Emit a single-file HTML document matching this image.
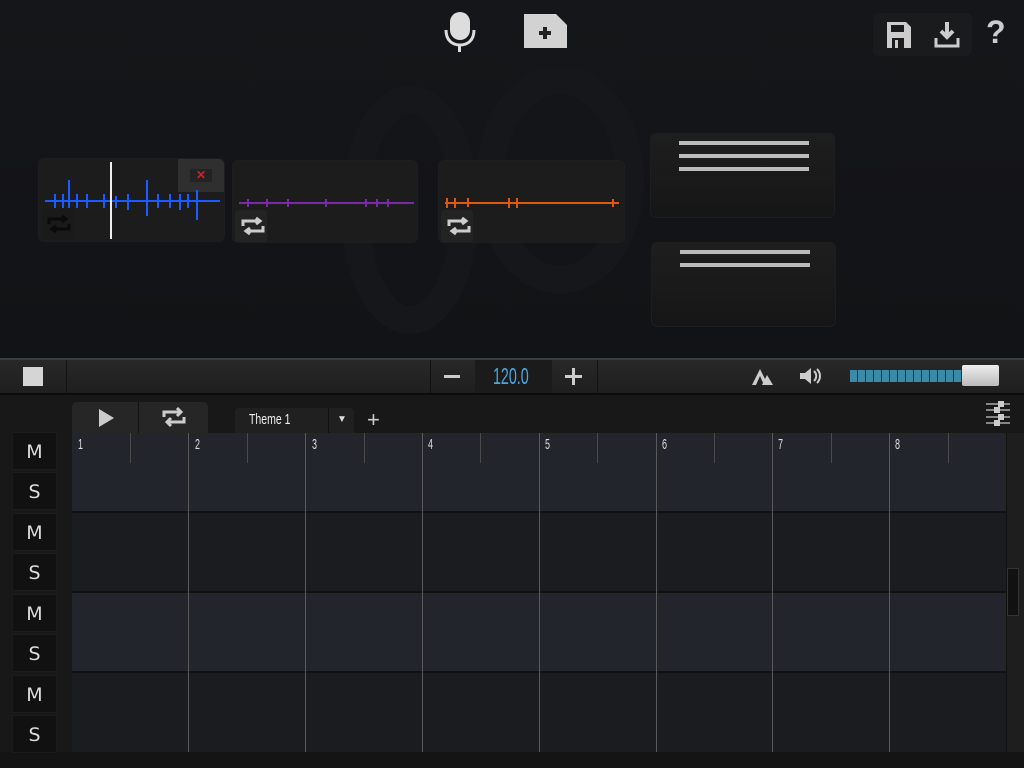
<!DOCTYPE html>
<html><head><meta charset="utf-8"><style>
*{margin:0;padding:0;box-sizing:border-box}
body{width:1024px;height:768px;overflow:hidden;background:#131416;font-family:"Liberation Sans",sans-serif;position:relative}
.a{position:absolute}
.card{position:absolute;background:#1c1c1d;border-radius:6px;border:1px solid #1e1e1f}
.loopbtn{position:absolute;width:32px;height:32px;background:#232324;border-radius:3px}
.ms{position:absolute;left:12px;width:45px;height:38px;background:#111;border:1px solid #1c1c1c;color:#ddd;font-size:19px;text-align:center;line-height:38px;font-family:"DejaVu Sans",sans-serif}
.num{position:absolute;top:436px;color:#ddd;font-size:15px;transform:scaleX(0.6);transform-origin:left}
</style></head><body>
<div class="a" style="left:0;top:0;width:1024px;height:358px;background:linear-gradient(#151619,#121316)"></div>
<svg class="a" style="left:330px;top:60px" width="330" height="290"><g fill="none" stroke="#16171a" stroke-width="28"><ellipse cx="80" cy="150" rx="55" ry="110"/><ellipse cx="230" cy="120" rx="70" ry="100"/></g></svg>
<svg class="a" style="left:442px;top:10px" width="36" height="44"><rect x="8" y="2" width="20" height="28" rx="10" fill="#ddd"/><path d="M4 20c0 10 6 15 14 15s14-5 14-15" stroke="#ddd" stroke-width="3" fill="none"/><rect x="16" y="34" width="3" height="8" fill="#ddd"/></svg>
<svg class="a" style="left:523px;top:13px" width="45" height="36"><path d="M1 1h32l11 11v23H1z" fill="#d2d2d2"/><path d="M20 14h4v4h4v4h-4v4h-4v-4h-4v-4h4z" fill="#222"/></svg>
<div class="a" style="left:873px;top:13px;width:99px;height:43px;background:#1a1b1d;border-radius:6px"></div>
<svg class="a" style="left:886px;top:21px" width="26" height="28"><path d="M1 1h19l5 5v21H1z" fill="#ccc"/><rect x="5" y="4" width="13" height="7" fill="#1a1b1d"/><rect x="6" y="17" width="12" height="10" fill="#1a1b1d"/><rect x="9" y="19" width="3" height="8" fill="#ccc"/></svg>
<svg class="a" style="left:933px;top:21px" width="28" height="28"><path d="M14 1v14M8 10l6 6 6-6" stroke="#ccc" stroke-width="4" fill="none"/><path d="M3 17v8h22v-8" stroke="#ccc" stroke-width="3" fill="none"/></svg>
<div class="a" style="left:986px;top:14px;color:#ccc;font-size:32px;font-weight:bold">?</div>
<div class="card" style="left:38px;top:158px;width:187px;height:84px"></div>
<div class="a" style="left:178px;top:159px;width:46px;height:33px;background:#2f2f30;border-radius:0 6px 0 0"></div>
<div class="a" style="left:190px;top:169px;width:22px;height:13px;background:#232324;color:#d02030;font-size:12px;text-align:center;line-height:13px;font-weight:bold">✕</div>
<svg class="a" style="left:36px;top:166px" width="185" height="76"><g stroke="#1a5cff" stroke-width="2"><line x1="9" y1="35" x2="184" y2="35"/><line x1="19" y1="28" x2="19" y2="42"/><line x1="27" y1="28" x2="27" y2="42"/><line x1="33" y1="14" x2="33" y2="48"/><line x1="41" y1="28" x2="41" y2="42"/><line x1="51" y1="28" x2="51" y2="42"/><line x1="68" y1="28" x2="68" y2="42"/><line x1="80" y1="30" x2="80" y2="42"/><line x1="92" y1="28" x2="92" y2="44"/><line x1="111" y1="14" x2="111" y2="50"/><line x1="122" y1="28" x2="122" y2="42"/><line x1="134" y1="28" x2="134" y2="42"/><line x1="144" y1="28" x2="144" y2="44"/><line x1="152" y1="28" x2="152" y2="42"/><line x1="161" y1="24" x2="161" y2="54"/></g></svg>
<div class="a" style="left:110px;top:162px;width:2px;height:77px;background:#eee"></div>
<div class="loopbtn" style="left:42px;top:208px;background:#1a1a1a"></div>
<svg class="a" style="left:46px;top:214px" width="26" height="20"><path d="M3 10V5h16M16 2l4 3-4 3M23 10v5H7M10 18l-4-3 4-3" stroke="#0a0a0a" stroke-width="3" fill="none"/></svg>
<div class="card" style="left:232px;top:160px;width:186px;height:83px"></div>
<svg class="a" style="left:238px;top:196px" width="176" height="16"><g stroke="#7a2aa8" stroke-width="2"><line x1="1" y1="7" x2="176" y2="7"/><line x1="10" y1="3" x2="10" y2="11"/><line x1="29" y1="3" x2="29" y2="11"/><line x1="50" y1="3" x2="50" y2="11"/><line x1="88" y1="3" x2="88" y2="11"/><line x1="128" y1="3" x2="128" y2="11"/><line x1="139" y1="3" x2="139" y2="11"/><line x1="150" y1="3" x2="150" y2="11"/></g></svg>
<div class="loopbtn" style="left:235px;top:210px"></div>
<svg class="a" style="left:240px;top:216px" width="26" height="20"><path d="M3 10V5h16M16 2l4 3-4 3M23 10v5H7M10 18l-4-3 4-3" stroke="#ccc" stroke-width="3" fill="none"/></svg>
<div class="card" style="left:438px;top:160px;width:187px;height:83px"></div>
<svg class="a" style="left:443px;top:195px" width="178" height="16"><g stroke="#e0580e" stroke-width="2"><line x1="2" y1="8" x2="176" y2="8"/><line x1="4" y1="3" x2="4" y2="13"/><line x1="12" y1="3" x2="12" y2="13"/><line x1="25" y1="3" x2="25" y2="12"/><line x1="66" y1="3" x2="66" y2="13"/><line x1="74" y1="3" x2="74" y2="13"/><line x1="170" y1="4" x2="170" y2="12"/></g></svg>
<div class="loopbtn" style="left:441px;top:210px"></div>
<svg class="a" style="left:446px;top:216px" width="26" height="20"><path d="M3 10V5h16M16 2l4 3-4 3M23 10v5H7M10 18l-4-3 4-3" stroke="#ccc" stroke-width="3" fill="none"/></svg>
<div class="card" style="left:650px;top:133px;width:185px;height:85px;background:linear-gradient(#1e1e1f,#161617)"></div>
<div class="a" style="left:679px;top:141px;width:130px;height:4px;background:#bbb"></div>
<div class="a" style="left:679px;top:154px;width:130px;height:4px;background:#bbb"></div>
<div class="a" style="left:679px;top:167px;width:130px;height:4px;background:#bbb"></div>
<div class="card" style="left:651px;top:242px;width:185px;height:85px;background:linear-gradient(#1e1e1f,#161617)"></div>
<div class="a" style="left:680px;top:250px;width:130px;height:4px;background:#bbb"></div>
<div class="a" style="left:680px;top:263px;width:130px;height:4px;background:#bbb"></div>
<div class="a" style="left:0;top:358px;width:1024px;height:2px;background:#3a3b3d"></div>
<div class="a" style="left:0;top:360px;width:1024px;height:33px;background:linear-gradient(#282829,#1f1f20)"></div>
<div class="a" style="left:0;top:393px;width:1024px;height:2px;background:#0c0c0c"></div>
<div class="a" style="left:23px;top:367px;width:20px;height:19px;background:#d5d5d5"></div>
<div class="a" style="left:66px;top:360px;width:1px;height:33px;background:#111"></div>
<div class="a" style="left:430px;top:360px;width:1px;height:33px;background:#111"></div>
<div class="a" style="left:475px;top:360px;width:77px;height:33px;background:#1b1b1c"></div>
<div class="a" style="left:597px;top:360px;width:1px;height:33px;background:#111"></div>
<div class="a" style="left:444px;top:375px;width:16px;height:3px;background:#ccc"></div>
<div class="a" style="left:493px;top:363px;color:#4aa8e0;font-size:23px;transform:scaleX(0.62);transform-origin:left">120.0</div>
<div class="a" style="left:565px;top:375px;width:17px;height:3px;background:#ccc"></div>
<div class="a" style="left:572px;top:368px;width:3px;height:17px;background:#ccc"></div>
<svg class="a" style="left:750px;top:368px" width="24" height="18"><path d="M2 17L10 1l8 16h-4L10 8l-4 9zM12 17l5-10 6 10z" fill="#ccc"/></svg>
<svg class="a" style="left:798px;top:366px" width="26" height="20"><path d="M2 7h5l6-5v16l-6-5H2z" fill="#ccc"/><path d="M16 5c3 3 3 7 0 10M19 3c4 4 4 10 0 14" stroke="#ccc" stroke-width="2" fill="none"/></svg>
<div class="a" style="left:850px;top:370px;width:115px;height:12px;background:repeating-linear-gradient(90deg,#3a8aa8 0 7px,#1a3a48 7px 8px)"></div>
<div class="a" style="left:962px;top:365px;width:37px;height:21px;background:linear-gradient(#eee,#bbb);border-radius:2px"></div>
<div class="a" style="left:0;top:395px;width:1024px;height:373px;background:#181819"></div>
<div class="a" style="left:72px;top:402px;width:136px;height:31px;background:#262627;border-radius:5px 5px 0 0"></div>
<div class="a" style="left:138px;top:402px;width:1px;height:31px;background:#111"></div>
<svg class="a" style="left:98px;top:408px" width="18" height="20"><path d="M1 1l15 9-15 9z" fill="#ccc"/></svg>
<svg class="a" style="left:161px;top:406px" width="26" height="22"><path d="M3 11V6h16M16 2l4 4-4 4M23 11v5H7M10 20l-4-4 4-4" stroke="#ccc" stroke-width="3" fill="none"/></svg>
<div class="a" style="left:235px;top:408px;width:119px;height:25px;background:#202021;border-radius:4px 4px 0 0"></div>
<div class="a" style="left:328px;top:408px;width:1px;height:25px;background:#111"></div>
<div class="a" style="left:249px;top:411px;color:#eee;font-size:15px;transform:scaleX(0.7);transform-origin:left">Theme 1</div>
<div class="a" style="left:337px;top:414px;color:#ddd;font-size:10px">▼</div>
<div class="a" style="left:367px;top:407px;color:#ccc;font-size:22px">+</div>
<svg class="a" style="left:985px;top:399px" width="26" height="28"><g stroke="#aaa" stroke-width="1.5"><line x1="1" y1="5" x2="25" y2="5"/><line x1="1" y1="11" x2="25" y2="11"/><line x1="1" y1="18" x2="25" y2="18"/><line x1="1" y1="24" x2="25" y2="24"/></g><g fill="#ccc"><rect x="13" y="2" width="6" height="6"/><rect x="9" y="8" width="6" height="6"/><rect x="13" y="15" width="6" height="6"/><rect x="9" y="21" width="6" height="6"/></g></svg>
<div class="a" style="left:72px;top:433px;width:934px;height:78px;background:#22252c"></div>
<div class="a" style="left:72px;top:513px;width:934px;height:78px;background:#1b1c20"></div>
<div class="a" style="left:72px;top:593px;width:934px;height:78px;background:#22252c"></div>
<div class="a" style="left:72px;top:673px;width:934px;height:79px;background:#1b1c20"></div>
<div class="a" style="left:72px;top:511px;width:934px;height:2px;background:#111"></div>
<div class="a" style="left:72px;top:591px;width:934px;height:2px;background:#111"></div>
<div class="a" style="left:72px;top:671px;width:934px;height:2px;background:#111"></div>
<div class="a" style="left:1006px;top:433px;width:18px;height:319px;background:#1e1e1f;border-left:1px solid #111"></div>
<div class="a" style="left:1007px;top:568px;width:12px;height:48px;background:#111;border:1px solid #333"></div>
<div class="a" style="left:0;top:752px;width:1024px;height:16px;background:#141414"></div>
<div class="a" style="left:188px;top:433px;width:1px;height:319px;background:#5a5a5c"></div>
<div class="a" style="left:305px;top:433px;width:1px;height:319px;background:#5a5a5c"></div>
<div class="a" style="left:422px;top:433px;width:1px;height:319px;background:#5a5a5c"></div>
<div class="a" style="left:539px;top:433px;width:1px;height:319px;background:#5a5a5c"></div>
<div class="a" style="left:656px;top:433px;width:1px;height:319px;background:#5a5a5c"></div>
<div class="a" style="left:772px;top:433px;width:1px;height:319px;background:#5a5a5c"></div>
<div class="a" style="left:889px;top:433px;width:1px;height:319px;background:#5a5a5c"></div>
<div class="a" style="left:130px;top:433px;width:1px;height:30px;background:#4a4a4c"></div>
<div class="a" style="left:247px;top:433px;width:1px;height:30px;background:#4a4a4c"></div>
<div class="a" style="left:364px;top:433px;width:1px;height:30px;background:#4a4a4c"></div>
<div class="a" style="left:480px;top:433px;width:1px;height:30px;background:#4a4a4c"></div>
<div class="a" style="left:597px;top:433px;width:1px;height:30px;background:#4a4a4c"></div>
<div class="a" style="left:714px;top:433px;width:1px;height:30px;background:#4a4a4c"></div>
<div class="a" style="left:831px;top:433px;width:1px;height:30px;background:#4a4a4c"></div>
<div class="a" style="left:948px;top:433px;width:1px;height:30px;background:#4a4a4c"></div>
<div class="num" style="left:78px">1</div><div class="num" style="left:195px">2</div><div class="num" style="left:312px">3</div><div class="num" style="left:428px">4</div><div class="num" style="left:545px">5</div><div class="num" style="left:662px">6</div><div class="num" style="left:778px">7</div><div class="num" style="left:895px">8</div>
<div class="ms" style="top:432px">M</div><div class="ms" style="top:472px">S</div>
<div class="ms" style="top:513px">M</div><div class="ms" style="top:553px">S</div>
<div class="ms" style="top:594px">M</div><div class="ms" style="top:634px">S</div>
<div class="ms" style="top:675px">M</div><div class="ms" style="top:715px">S</div>
</body></html>
